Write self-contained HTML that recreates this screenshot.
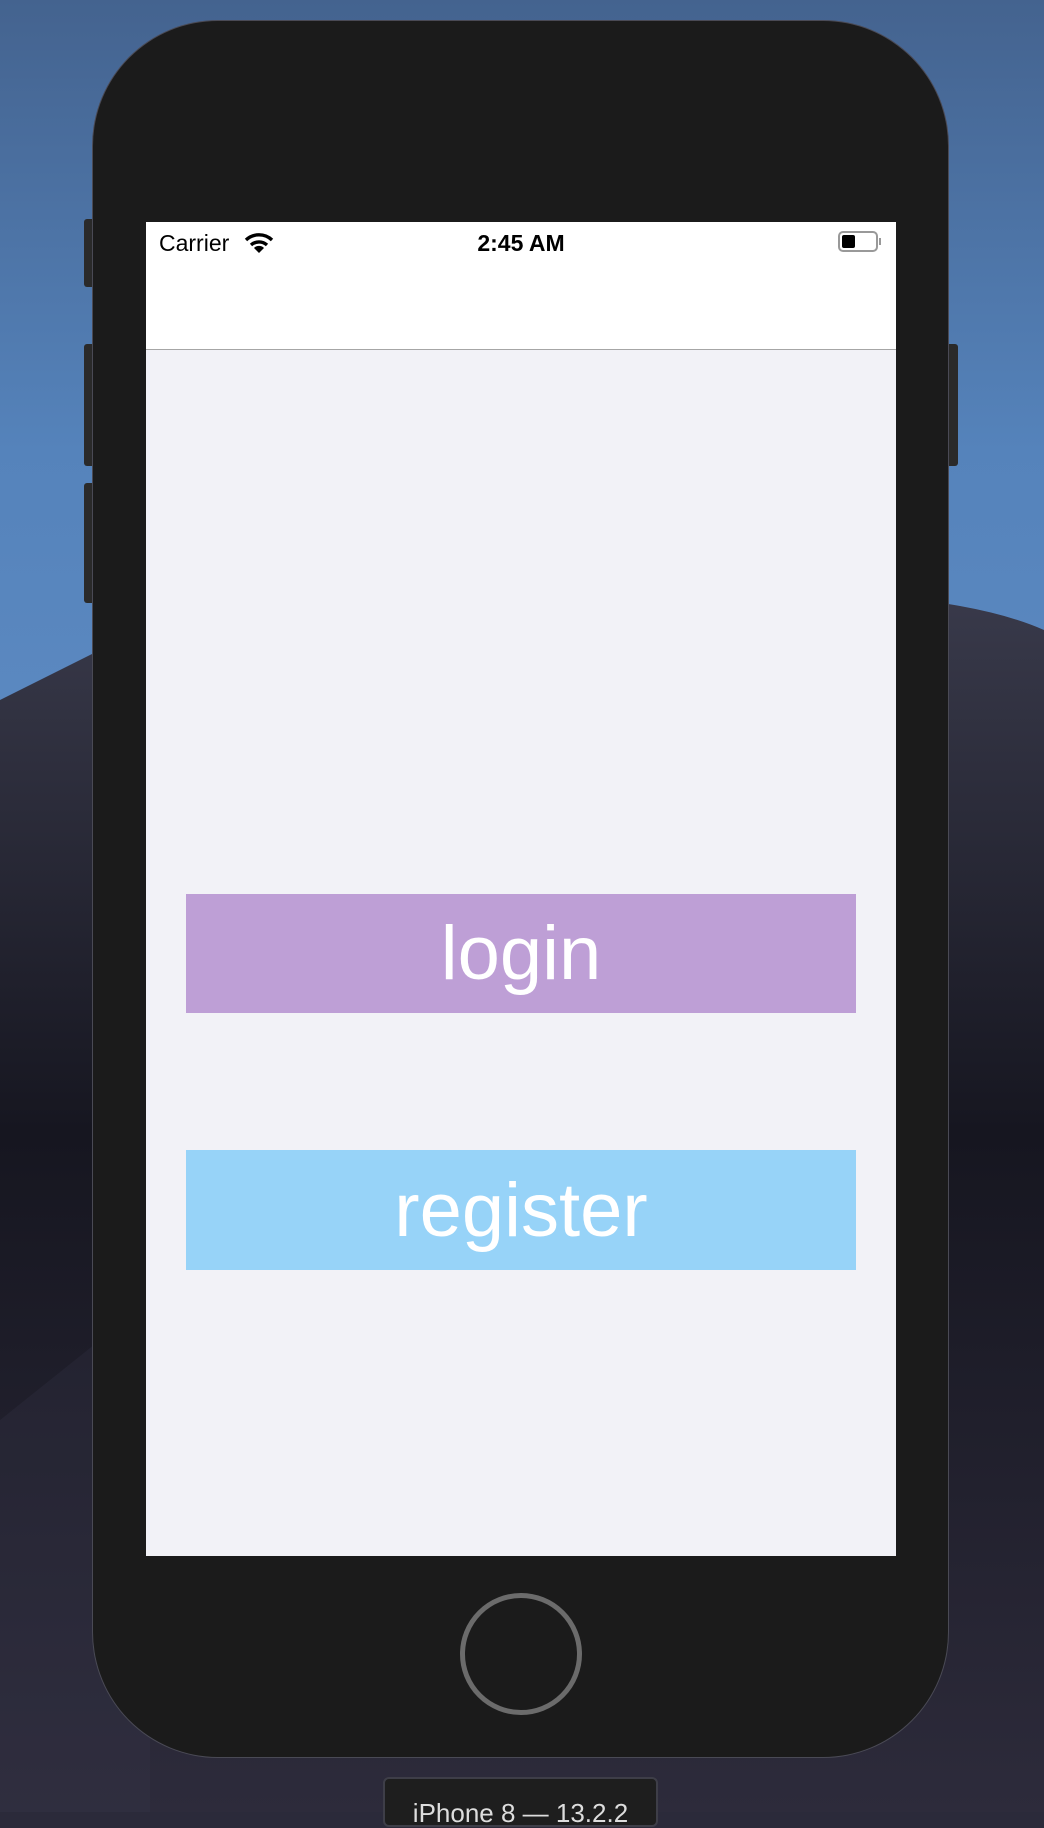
<!DOCTYPE html>
<html><head><meta charset="utf-8"><style>
html,body{margin:0;padding:0}
body{width:1044px;height:1812px;position:relative;overflow:hidden;font-family:"Liberation Sans",sans-serif;background:#2b2a3a}
.abs{position:absolute}
</style></head><body>
<svg class="abs" style="left:0;top:0" width="1044" height="1812">
<defs>
<linearGradient id="sky" x1="0" y1="0" x2="0" y2="1">
<stop offset="0" stop-color="#44638f"/><stop offset="0.5" stop-color="#5583bb"/><stop offset="1" stop-color="#5f8cc4"/>
</linearGradient>
<linearGradient id="m1" x1="0" y1="0" x2="0" y2="1">
<stop offset="0" stop-color="#3a3b4c"/><stop offset="0.45" stop-color="#161620"/><stop offset="1" stop-color="#2d2b3b"/>
</linearGradient>
</defs>
<rect width="1044" height="900" fill="url(#sky)"/>
<path d="M0,700 L120,640 Q400,560 700,580 Q900,595 960,606 Q1010,615 1044,630 L1044,1812 L0,1812 Z" fill="url(#m1)"/>
<polygon points="0,1420 150,1300 150,1812 0,1812" fill="#38364a" opacity="0.25"/>
</svg>
<!-- side buttons -->
<div class="abs" style="left:84px;top:219px;width:14px;height:68px;background:#2a2a2a;border-radius:3px"></div>
<div class="abs" style="left:84px;top:344px;width:14px;height:122px;background:#2a2a2a;border-radius:3px"></div>
<div class="abs" style="left:84px;top:483px;width:14px;height:120px;background:#2a2a2a;border-radius:3px"></div>
<div class="abs" style="left:944px;top:344px;width:14px;height:122px;background:#2a2a2a;border-radius:3px"></div>
<!-- phone -->
<div class="abs" style="left:93px;top:21px;width:855px;height:1736px;background:#1b1b1b;border-radius:125px;box-shadow:0 0 0 1px #4a4a55"></div>
<!-- screen -->
<div class="abs" style="left:146px;top:222px;width:750px;height:1334px;background:#f2f2f7">
  <div class="abs" style="left:0;top:0;width:750px;height:127px;background:#fff;border-bottom:1px solid #a6a6a6"></div>
  <div class="abs" style="left:13px;top:6px;font-size:23px;line-height:30px;color:#000">Carrier</div>
  <svg class="abs" style="left:98px;top:10px" width="30" height="22" viewBox="0 0 30 22">
    <path d="M2 8 A19 19 0 0 1 28 8" stroke="#000" stroke-width="3.4" fill="none"/>
    <path d="M7 13 A12 12 0 0 1 23 13" stroke="#000" stroke-width="3.4" fill="none"/>
    <path d="M15 21 L10 16 A7 7 0 0 1 20 16 Z" fill="#000"/>
  </svg>
  <div class="abs" style="left:0;top:6px;width:750px;text-align:center;font-size:23px;line-height:30px;font-weight:bold;color:#000">2:45 AM</div>
  <div class="abs" style="left:692px;top:9px;width:40px;height:21px;border:2px solid #999;border-radius:5px;box-sizing:border-box"></div>
  <div class="abs" style="left:696px;top:13px;width:13px;height:13px;background:#000;border-radius:2px"></div>
  <div class="abs" style="left:733px;top:16px;width:2px;height:7px;background:#999"></div>
  <div class="abs" style="left:40px;top:672px;width:670px;height:119px;background:#be9fd6;color:#fff;font-size:76px;display:flex;align-items:center;justify-content:center">login</div>
  <div class="abs" style="left:40px;top:928px;width:670px;height:120px;background:#97d3f8;color:#fff;font-size:76px;display:flex;align-items:center;justify-content:center">register</div>
</div>
<!-- home button -->
<div class="abs" style="left:460px;top:1593px;width:122px;height:122px;border:5px solid #6b6b6b;border-radius:50%;box-sizing:border-box"></div>
<!-- label -->
<div class="abs" style="left:383px;top:1777px;width:275px;height:50px;background:#1e1e1e;border:2px solid #3e3e48;border-radius:6px;color:#ddd;font-size:26px;text-align:center;line-height:26px;padding-top:21px;box-sizing:border-box">iPhone 8 — 13.2.2</div>
</body></html>
